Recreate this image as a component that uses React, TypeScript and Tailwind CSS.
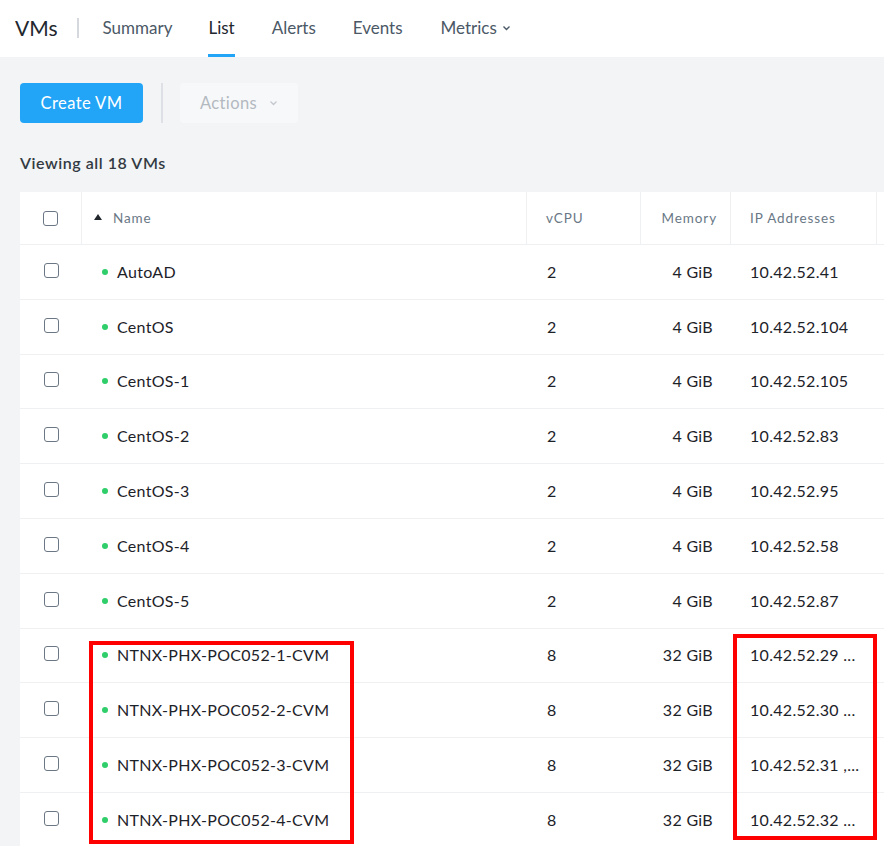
import React from "react";

const rows = [
  { name: "AutoAD", cpu: "2", mem: "4 GiB", ip: "10.42.52.41" },
  { name: "CentOS", cpu: "2", mem: "4 GiB", ip: "10.42.52.104" },
  { name: "CentOS-1", cpu: "2", mem: "4 GiB", ip: "10.42.52.105" },
  { name: "CentOS-2", cpu: "2", mem: "4 GiB", ip: "10.42.52.83" },
  { name: "CentOS-3", cpu: "2", mem: "4 GiB", ip: "10.42.52.95" },
  { name: "CentOS-4", cpu: "2", mem: "4 GiB", ip: "10.42.52.58" },
  { name: "CentOS-5", cpu: "2", mem: "4 GiB", ip: "10.42.52.87" },
];
const cvms = [
  { name: "NTNX-PHX-POC052-1-CVM", cpu: "8", mem: "32 GiB", ip: "10.42.52.29 ..." },
  { name: "NTNX-PHX-POC052-2-CVM", cpu: "8", mem: "32 GiB", ip: "10.42.52.30 ..." },
  { name: "NTNX-PHX-POC052-3-CVM", cpu: "8", mem: "32 GiB", ip: "10.42.52.31 ,..." },
  { name: "NTNX-PHX-POC052-4-CVM", cpu: "8", mem: "32 GiB", ip: "10.42.52.32 ..." },
];

function Checkbox() {
  return <div className="w-[15px] h-[15px] rounded-[3px] border border-[#6b7785] bg-white" />;
}

function Row({ r }: { r: { name: string; cpu: string; mem: string; ip: string } }) {
  return (
    <div className="flex h-[54.8px] border-b border-[#eef0f2] items-center text-[16px] tracking-[0.3px] text-[#1d2229]">
      <div className="w-[62px] flex justify-center -mt-[3px]">
        <Checkbox />
      </div>
      <div className="w-[445px] flex items-center pl-[20px]">
        <span className="w-[6px] h-[6px] rounded-full bg-[#2fce6a] mr-[9px]" />
        <span>{r.name}</span>
      </div>
      <div className="w-[114px] pl-[20px]">{r.cpu}</div>
      <div className="w-[90px] text-right pr-[18px] whitespace-nowrap">{r.mem}</div>
      <div className="w-[146px] pl-[19px] whitespace-nowrap">{r.ip}</div>
      <div className="w-[200px]" />
    </div>
  );
}

export default function App() {
  return (
    <div className="w-[884px] h-[846px] overflow-hidden bg-[#f2f4f6]" style={{ fontFamily: "Lato, 'Open Sans', sans-serif" }}>
      <div className="h-[57px] bg-white flex items-center px-[15px]">
        <span className="text-[21px] text-[#22272e] -mt-[2px]">VMs</span>
        <span className="w-[2px] h-[20px] bg-[#d5d9de] ml-[19px] mr-[24px] -mt-[2px]" />
        <div className="flex h-full text-[17px] text-[#4b5866]">
          <div className="flex items-center mr-[36px] -mt-[2px]">Summary</div>
          <div className="relative flex items-center mr-[37px] text-[#22272e]">
            <span className="-mt-[2px]">List</span>
            <span className="absolute bottom-0 left-0 right-0 h-[3px] bg-[#22a5f7]" />
          </div>
          <div className="flex items-center mr-[37px] -mt-[2px]">Alerts</div>
          <div className="flex items-center mr-[38px] -mt-[2px]">Events</div>
          <div className="flex items-center gap-[5px] -mt-[2px]">
            Metrics
            <svg width="9" height="6" viewBox="0 0 9 6"><path d="M1.5 1.5 L4.5 4.5 L7.5 1.5" stroke="#4b5866" strokeWidth="1.4" fill="none" /></svg>
          </div>
        </div>
      </div>

      <div className="pl-[20px]">
        <div className="flex items-center mt-[26px] h-[40px]">
          <button className="h-[40px] w-[123px] rounded-[4px] bg-[#22a5f7] text-white text-[16.5px] tracking-[0.4px]">Create VM</button>
          <span className="w-[2px] h-[40px] bg-[#dde1e5] ml-[18px] mr-[17px]" />
          <div className="h-[40px] w-[118px] rounded-[4px] bg-[#f7f8fa] text-[#b3b9c0] text-[16.5px] tracking-[0.4px] flex items-center justify-center gap-[12px]">
            Actions
            <svg width="9" height="6" viewBox="0 0 9 6"><path d="M1.5 1.5 L4.5 4.5 L7.5 1.5" stroke="#c3c8ce" strokeWidth="1.3" fill="none" /></svg>
          </div>
        </div>
        <div className="mt-[29px] text-[16px] tracking-[0.55px] font-semibold text-[#333a42] h-[22px] leading-[22px]">Viewing all 18 VMs</div>

        <div className="mt-[18px] bg-white w-[1100px]">
          <div className="flex h-[53px] border-b border-[#eef0f2] items-center text-[13.5px] tracking-[0.9px] text-[#6a7886]">
            <div className="w-[62px] h-full flex items-center justify-center border-r border-[#eef0f2]">
              <Checkbox />
            </div>
            <div className="w-[445px] h-full flex items-center pl-[12px] border-r border-[#eef0f2]">
              <svg width="8" height="6" viewBox="0 0 8 6" className="mr-[11px] -mt-[3px]"><path d="M0 6 L4 0 L8 6 Z" fill="#22272e" /></svg>
              Name
            </div>
            <div className="w-[114px] h-full flex items-center pl-[19px] border-r border-[#eef0f2]">vCPU</div>
            <div className="w-[90px] h-full flex items-center justify-end pr-[13px] border-r border-[#eef0f2]">Memory</div>
            <div className="w-[146px] h-full flex items-center pl-[19px] border-r border-[#eef0f2]">IP Addresses</div>
            <div className="w-[200px]" />
          </div>
          {rows.map((r) => (
            <Row key={r.name} r={r} />
          ))}
          <div className="relative">
            {cvms.map((r) => (
              <Row key={r.name} r={r} />
            ))}
            <div className="absolute left-[69px] top-[12px] w-[265px] h-[203px] border-4 border-[#ff0000]" />
            <div className="absolute left-[713px] top-[5px] w-[144px] h-[206px] border-4 border-[#ff0000]" />
          </div>
        </div>
      </div>
    </div>
  );
}
